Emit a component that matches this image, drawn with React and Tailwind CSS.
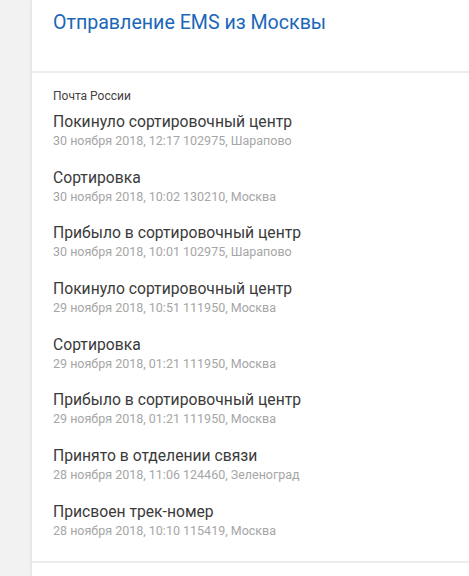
const events = [
  { title: 'Покинуло сортировочный центр', info: '30 ноября 2018, 12:17 102975, Шарапово' },
  { title: 'Сортировка', info: '30 ноября 2018, 10:02 130210, Москва' },
  { title: 'Прибыло в сортировочный центр', info: '30 ноября 2018, 10:01 102975, Шарапово' },
  { title: 'Покинуло сортировочный центр', info: '29 ноября 2018, 10:51 111950, Москва' },
  { title: 'Сортировка', info: '29 ноября 2018, 01:21 111950, Москва' },
  { title: 'Прибыло в сортировочный центр', info: '29 ноября 2018, 01:21 111950, Москва' },
  { title: 'Принято в отделении связи', info: '28 ноября 2018, 11:06 124460, Зеленоград' },
  { title: 'Присвоен трек-номер', info: '28 ноября 2018, 10:10 115419, Москва' },
]

export default function App() {
  return (
    <div className="flex min-h-[576px] bg-[#f2f2f2] font-['Roboto',sans-serif]">
      <div className="w-[32px] shrink-0" />
      <div className="flex-1 bg-white shadow-[-1px_0_3px_rgba(0,0,0,0.08)]">
        {/* Header */}
        <div className="h-[73px] pl-[21px] pt-[10px] border-b-2 border-[#ececec]">
          <h1 className="text-[19.6px] leading-[26px] text-[#1b67b8]">Отправление EMS из Москвы</h1>
        </div>

        {/* Tracking history */}
        <div className="pl-[21px] pt-[15px] pb-[3px] border-b-2 border-[#ececec]">
          <div className="text-[12px] leading-[16px] text-[#424242] mb-[8px]">Почта России</div>
          {events.map((e, i) => (
            <div key={i} className="mb-[18.7px]">
              <div className="text-[15.7px] leading-[20px] text-[#3a3a3a]">{e.title}</div>
              <div className="text-[12.5px] leading-[16px] text-[#a6a6a6] mt-px">{e.info}</div>
            </div>
          ))}
        </div>
      </div>
    </div>
  )
}
